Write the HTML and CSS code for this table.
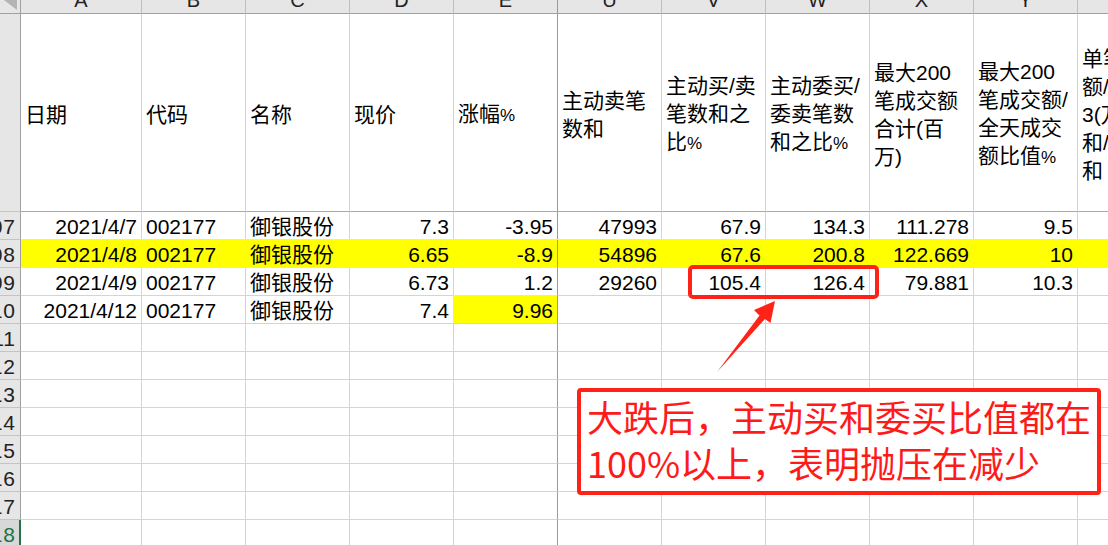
FILE: index.html
```html
<!DOCTYPE html>
<html lang="zh">
<head>
<meta charset="utf-8">
<title>Sheet</title>
<link rel="stylesheet" href="styles.css">
</head>
<body>
<div class="sheet">
  <!-- column letters -->
  <div class="c hd corner"><svg class="tri" width="20" height="13" viewBox="0 0 20 13"><polygon points="4,0 17,0 17,10" fill="#b4b4b4"/></svg></div>
  <div class="c hd">A</div>
  <div class="c hd">B</div>
  <div class="c hd">C</div>
  <div class="c hd">D</div>
  <div class="c hd fz">E</div>
  <div class="c hd">U</div>
  <div class="c hd">V</div>
  <div class="c hd">W</div>
  <div class="c hd">X</div>
  <div class="c hd">Y</div>
  <div class="c hd z"></div>

  <!-- header row -->
  <div class="c rn"></div>
  <div class="c h1"><span>日期</span></div>
  <div class="c h1"><span>代码</span></div>
  <div class="c h1"><span>名称</span></div>
  <div class="c h1"><span>现价</span></div>
  <div class="c h1 fz"><span>涨幅<i class="pc">%</i></span></div>
  <div class="c h1"><span>主动卖笔<br>数和</span></div>
  <div class="c h1"><span>主动买/卖<br>笔数和之<br>比<i class="pc">%</i></span></div>
  <div class="c h1"><span>主动委买/<br>委卖笔数<br>和之比<i class="pc">%</i></span></div>
  <div class="c h1"><span>最大200<br>笔成交额<br>合计(百<br>万)</span></div>
  <div class="c h1"><span>最大200<br>笔成交额/<br>全天成交<br>额比值<i class="pc">%</i></span></div>
  <div class="c h1 z"><span>单笔成交<br>额/<br>3(万元<br>和/<br>和</span></div>

  <!-- 107 -->
  <div class="c rn"><span>107</span></div>
  <div class="c n">2021/4/7</div>
  <div class="c">002177</div>
  <div class="c">御银股份</div>
  <div class="c n">7.3</div>
  <div class="c n fz">-3.95</div>
  <div class="c n">47993</div>
  <div class="c n">67.9</div>
  <div class="c n">134.3</div>
  <div class="c n">111.278</div>
  <div class="c n">9.5</div>
  <div class="c z"></div>

  <!-- 108 -->
  <div class="c rn"><span>108</span></div>
  <div class="c n y">2021/4/8</div>
  <div class="c y">002177</div>
  <div class="c y">御银股份</div>
  <div class="c n y">6.65</div>
  <div class="c n y fz">-8.9</div>
  <div class="c n y">54896</div>
  <div class="c n y">67.6</div>
  <div class="c n y">200.8</div>
  <div class="c n y">122.669</div>
  <div class="c n y">10</div>
  <div class="c y z"></div>

  <!-- 109 -->
  <div class="c rn"><span>109</span></div>
  <div class="c n">2021/4/9</div>
  <div class="c">002177</div>
  <div class="c">御银股份</div>
  <div class="c n">6.73</div>
  <div class="c n fz">1.2</div>
  <div class="c n">29260</div>
  <div class="c n">105.4</div>
  <div class="c n">126.4</div>
  <div class="c n">79.881</div>
  <div class="c n">10.3</div>
  <div class="c z"></div>

  <!-- 110 -->
  <div class="c rn"><span>110</span></div>
  <div class="c n">2021/4/12</div>
  <div class="c">002177</div>
  <div class="c">御银股份</div>
  <div class="c n">7.4</div>
  <div class="c n fz yc">9.96</div>
  <div class="c"></div><div class="c"></div><div class="c"></div><div class="c"></div><div class="c"></div><div class="c z"></div>

  <!-- 111 -->
  <div class="c rn"><span>111</span></div>
  <div class="c"></div><div class="c"></div><div class="c"></div><div class="c"></div><div class="c fz"></div>
  <div class="c"></div><div class="c"></div><div class="c"></div><div class="c"></div><div class="c"></div><div class="c z"></div>
  <!-- 112 -->
  <div class="c rn"><span>112</span></div>
  <div class="c"></div><div class="c"></div><div class="c"></div><div class="c"></div><div class="c fz"></div>
  <div class="c"></div><div class="c"></div><div class="c"></div><div class="c"></div><div class="c"></div><div class="c z"></div>
  <!-- 113 -->
  <div class="c rn"><span>113</span></div>
  <div class="c"></div><div class="c"></div><div class="c"></div><div class="c"></div><div class="c fz"></div>
  <div class="c"></div><div class="c"></div><div class="c"></div><div class="c"></div><div class="c"></div><div class="c z"></div>
  <!-- 114 -->
  <div class="c rn"><span>114</span></div>
  <div class="c"></div><div class="c"></div><div class="c"></div><div class="c"></div><div class="c fz"></div>
  <div class="c"></div><div class="c"></div><div class="c"></div><div class="c"></div><div class="c"></div><div class="c z"></div>
  <!-- 115 -->
  <div class="c rn"><span>115</span></div>
  <div class="c"></div><div class="c"></div><div class="c"></div><div class="c"></div><div class="c fz"></div>
  <div class="c"></div><div class="c"></div><div class="c"></div><div class="c"></div><div class="c"></div><div class="c z"></div>
  <!-- 116 -->
  <div class="c rn"><span>116</span></div>
  <div class="c"></div><div class="c"></div><div class="c"></div><div class="c"></div><div class="c fz"></div>
  <div class="c"></div><div class="c"></div><div class="c"></div><div class="c"></div><div class="c"></div><div class="c z"></div>
  <!-- 117 -->
  <div class="c rn"><span>117</span></div>
  <div class="c"></div><div class="c"></div><div class="c"></div><div class="c"></div><div class="c fz"></div>
  <div class="c"></div><div class="c"></div><div class="c"></div><div class="c"></div><div class="c"></div><div class="c z"></div>
  <!-- 118 -->
  <div class="c rn sel"><span>118</span></div>
  <div class="c"></div><div class="c"></div><div class="c"></div><div class="c"></div><div class="c fz"></div>
  <div class="c"></div><div class="c"></div><div class="c"></div><div class="c"></div><div class="c"></div><div class="c z"></div>

  <!-- annotations -->
  <div class="mark"></div>
  <svg class="arrow" width="1108" height="545" viewBox="0 0 1108 545">
    <polygon points="717,372 759.5,315.5 754,310 775,301 770.5,323 765,319" fill="#ff2217"/>
  </svg>
  <div class="note">大跌后，主动买和委买比值都在<br>100%以上，表明抛压在减少</div>
</div>
</body>
</html>
```

FILE: styles.css
```css
html, body {
  margin: 0;
  padding: 0;
  background: #fff;
}
body {
  overflow: hidden;
  font-family: "Liberation Sans", "Noto Sans CJK SC", sans-serif;
  color: #000;
}
.sheet {
  position: relative;
  display: grid;
  grid-template-columns: 21px 121px repeat(9, 104px) 1fr;
  grid-template-rows: 14px 198px repeat(12, 28px);
  width: 1108px;
  height: 545px;
  overflow: hidden;
}
.c {
  box-sizing: border-box;
  border-right: 1px solid #d4d4d4;
  border-bottom: 1px solid #d4d4d4;
  overflow: hidden;
  white-space: nowrap;
  font-size: 21px;
  line-height: 28px;
  padding: 1px 4px 0 4px;
}
.n { text-align: right; }
.z { border-right: 0; }
.pc {
  font-style: normal;
  font-family: "Liberation Sans Narrow", "Liberation Sans", sans-serif;
  font-size: 17px;
  letter-spacing: -1px;
}

.hd {
  background: #e6e6e6;
  border-right-color: #bfbfbf;
  border-bottom-color: #a0a0a0;
  text-align: center;
  font-size: 20px;
  line-height: 0;
  padding: 0;
  color: #222;
}
.corner {
  border-right-color: #a0a0a0;
}
.tri { display: block; }

.rn {
  display: flex;
  justify-content: flex-end;
  background: #e6e6e6;
  border-right-color: #a0a0a0;
  border-bottom-color: #c4c4c4;
  padding: 1px 5px 0 0;
  color: #222;
}
.rn span {
  flex: none;
  letter-spacing: 1px;
  margin-right: -1px;
}
.rn.sel {
  background: #d8d8d8;
  color: #217346;
  border-right: 2px solid #217346;
  padding-right: 4px;
}

.h1 {
  display: flex;
  align-items: center;
  padding-top: 5px;
  border-bottom-color: #a8a8a8;
}
.fz { border-right-color: #9a9a9a; }

.y {
  background: #ffff00;
  border-right-color: #ffff00;
  border-bottom-color: #ffff00;
  box-shadow: 0 -1px 0 #ffff00;
}
.y.fz { border-right-color: #9a9a9a; }
.yc {
  background: #ffff00;
  box-shadow: -1px -1px 0 #ffff00;
}

.mark {
  position: absolute;
  left: 688px;
  top: 265px;
  width: 191px;
  height: 34px;
  box-sizing: border-box;
  border: 4px solid #ff2217;
  border-radius: 5px;
}
.arrow {
  position: absolute;
  left: 0;
  top: 0;
  pointer-events: none;
}
.note {
  position: absolute;
  left: 577px;
  top: 388px;
  width: 524px;
  height: 107px;
  box-sizing: border-box;
  border: 4px solid #ff2217;
  border-radius: 4px;
  background: #fff;
  padding: 1px 0 0 6px;
  font-family: "Noto Sans CJK SC", sans-serif;
  font-size: 36px;
  line-height: 46px;
  color: #ff1a1a;
  white-space: nowrap;
}
```
